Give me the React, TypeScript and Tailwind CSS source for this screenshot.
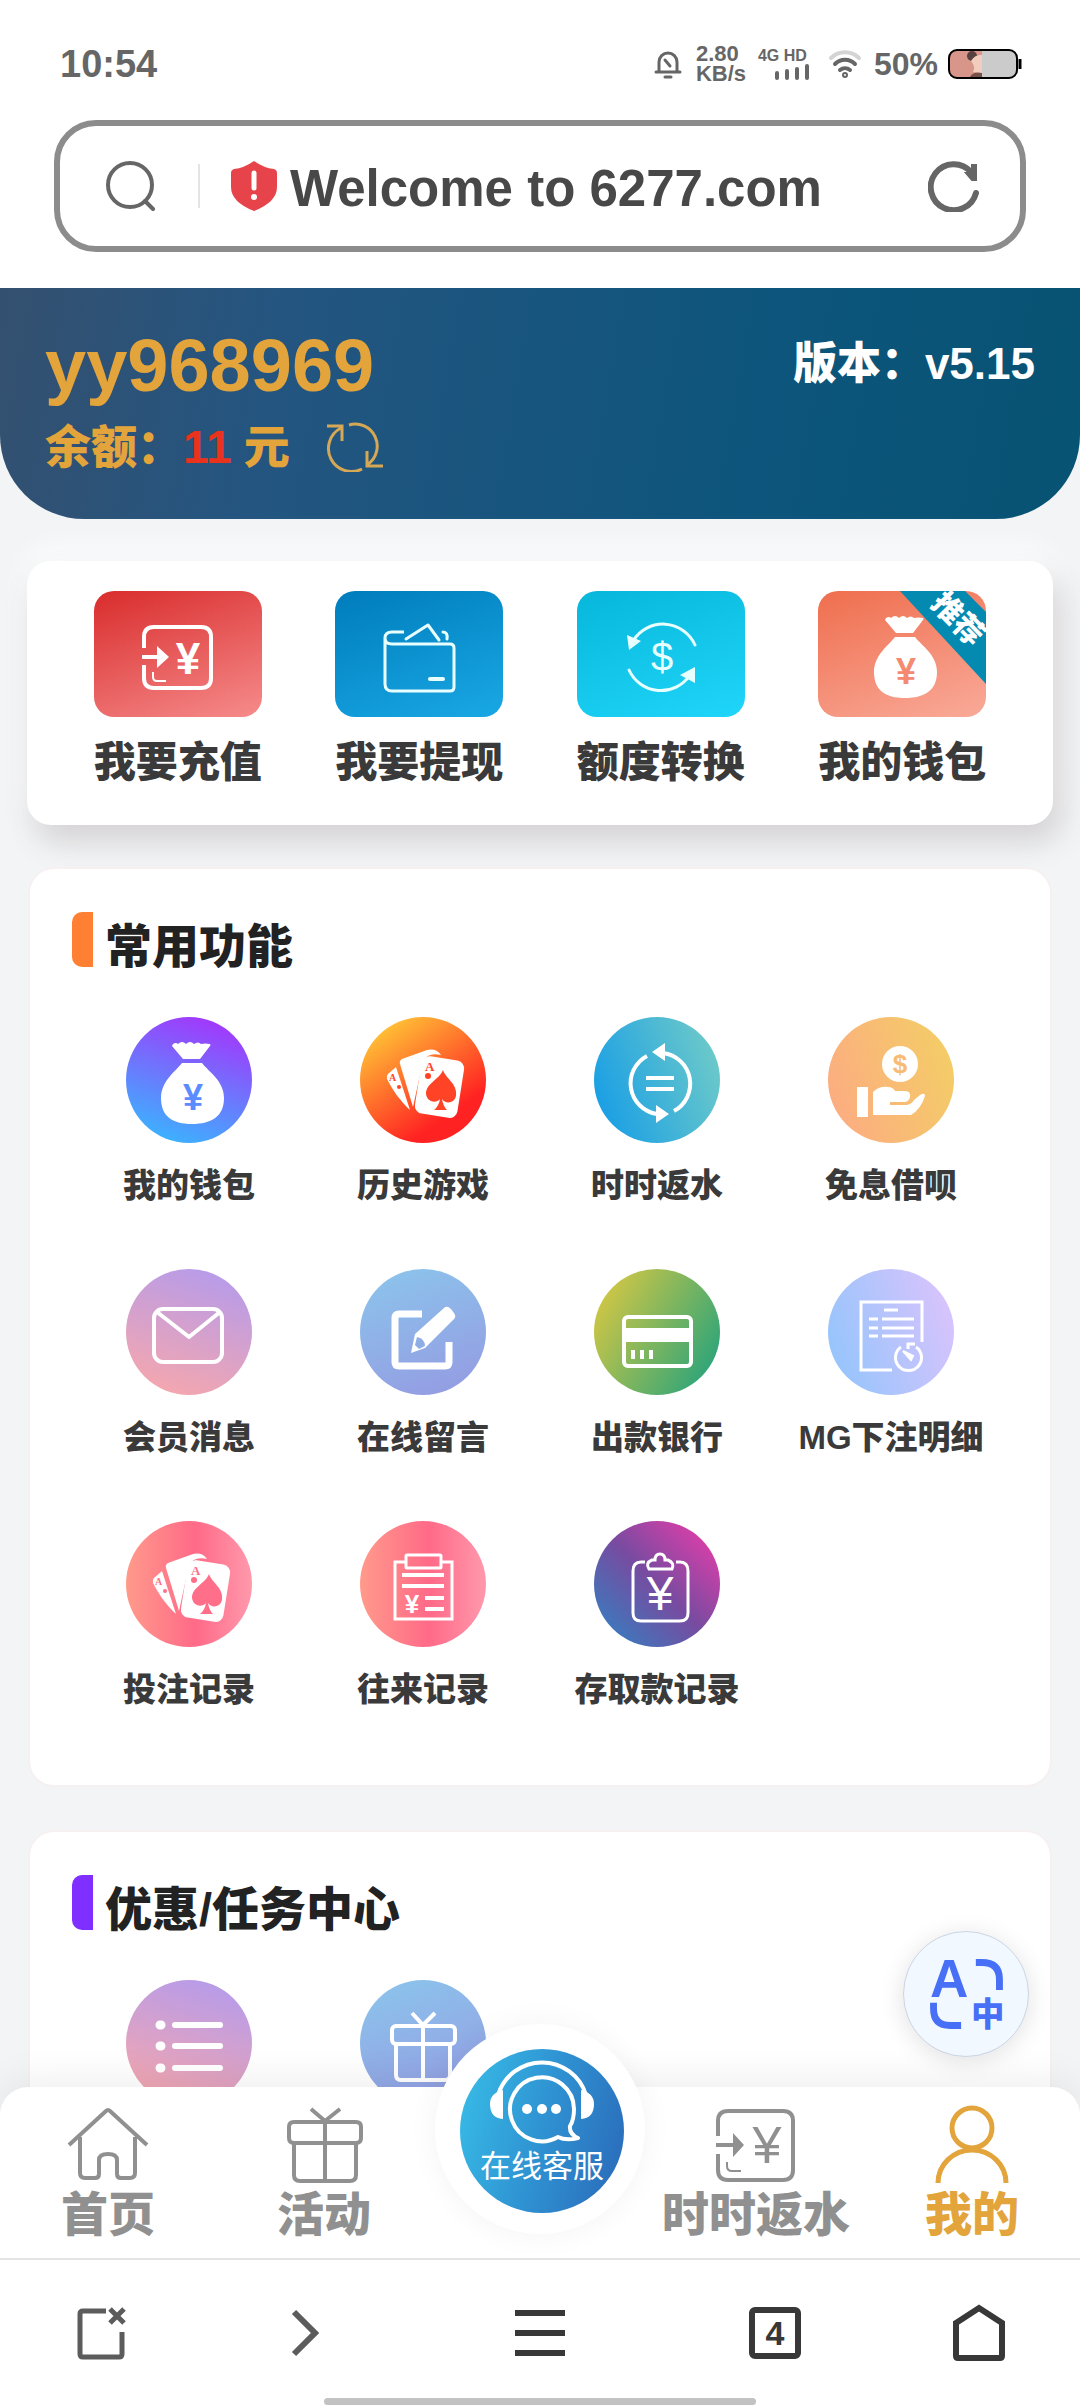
import type { ReactNode } from 'react';
import { clsx } from 'clsx';

const latin = "'Liberation Sans', 'Noto Sans CJK SC', sans-serif";

type IconProps = { tint?: string };

function Yen({ x, y, size, fill = '#fff', weight = 400 }: { x: number; y: number; size: number; fill?: string; weight?: number }) {
  return (
    <text x={x} y={y} textAnchor="middle" fontSize={size} fill={fill} stroke="none" fontWeight={weight} fontFamily={latin}>
      ¥
    </text>
  );
}

function MoneyBag({ tint }: IconProps) {
  return (
    <g>
      <path d="M12 27q3-2 5 0q4-4 8 0q4-4 8 0q4-3 7 0q4-1 9 0q1 1 0 2l-10 13H22L11 29z" fill="#fff" />
      <path d="M21 46h20c7 9 22 18 22 35c0 18-12 26-32 26S0 99 0 81c0-17 15-27 21-35z" fill="#fff" />
      <Yen x={32} y={93} size={36} fill={tint} weight={700} />
    </g>
  );
}

function CardsIcon({ tint }: IconProps) {
  return (
    <g fill="#fff">
      <path d="M36 50l14 43c-10-9-18-21-23-31q-1-3 1-5z" />
      <path d="M53 90L40 47q-1-3 2-5l25-9q9-2 14 5q-13-3-18 6z" />
      <rect x="58" y="41" width="43" height="58" rx="8" transform="rotate(9 79 70)" />
      <path d="M83 53c3 9 15 14 13 26c-2 8-11 8-14 3q1 7 5 11H74q5-4 6-11c-4 5-13 3-14-5c0-11 13-14 17-24z" fill={tint} />
      <text x="65" y="54" fontSize="13" fontWeight="700" fill={tint} fontFamily="'Liberation Serif', serif">A</text>
      <text x="29" y="64" fontSize="10" fontWeight="700" fill={tint} fontFamily="'Liberation Serif', serif">A</text>
      <circle cx="68" cy="59" r="3" fill={tint} />
      <circle cx="39" cy="70" r="2" fill={tint} />
    </g>
  );
}

function RebateIcon() {
  return (
    <g fill="none" stroke="#fff" strokeWidth="4">
      <path d="M69 36a31 31 0 0 1 11 58M53 39a31 31 0 0 0 10 58" />
      <path d="M52 61h28M52 72h28" />
      <path d="M58 35l13-9v18zM75 97l-13-9v18z" fill="#fff" stroke="none" />
    </g>
  );
}

function LoanIcon({ tint }: IconProps) {
  return (
    <g fill="#fff">
      <circle cx="72" cy="47" r="18" />
      <text x="72" y="56" textAnchor="middle" fontSize="26" fontWeight="700" fill={tint} fontFamily={latin}>$</text>
      <rect x="29" y="70" width="11" height="30" />
      <path d="M45 75q6-6 15-5q5 0 7 4h10q6 0 5 6q-1 5-6 5H62v3h17q5-1 7-5l6-5q5-3 5 1q-4 13-14 19H45z" />
    </g>
  );
}

function MailIcon() {
  return (
    <g fill="none" stroke="#fff" strokeWidth="4">
      <rect x="28" y="40" width="68" height="53" rx="9" />
      <path d="M31 43l32 25l31-25" strokeLinejoin="round" />
    </g>
  );
}

function WriteIcon({ tint }: IconProps) {
  return (
    <g fill="none" stroke="#fff" strokeWidth="7">
      <path d="M62 45H39q-4 0-4 4v44q0 4 4 4h46q4 0 4-4V73" />
      <path d="M51 84l4-19l29-26q3-3 7 1l3 4q3 4-1 7L65 79z" fill="#fff" stroke="none" />
      <path d="M57 68q8 2 8 9l-6 3l-4-4z" fill={tint} stroke="none" />
    </g>
  );
}

function BankIcon() {
  return (
    <g fill="none" stroke="#fff" strokeWidth="4">
      <rect x="30" y="48" width="67" height="49" rx="4" />
      <path d="M30 66h67" strokeWidth="14" />
      <path d="M39 81v9M48 81v9M57 81v9" />
    </g>
  );
}

function BetDetailIcon() {
  return (
    <g fill="none" stroke="#fff" strokeWidth="3">
      <path d="M94 73V33H33v68h31" />
      <path d="M56 41h14M41 50h9M54 50h32M41 59h9M54 59h32M41 67h9M54 67h32" />
      <path d="M73 78a13 13 0 1 0 15 0M80 80v-5h7" />
      <path d="M83 91l-8-9l10 5z" fill="#fff" strokeWidth="2" />
    </g>
  );
}

function StatementIcon() {
  return (
    <g fill="none" stroke="#fff" strokeWidth="3">
      <path d="M46 41H35v57h57V41H81" />
      <rect x="46" y="34" width="35" height="13" rx="1" />
      <path d="M42 54h42M42 65h42M65 77h19M65 88h19" strokeWidth="4" />
      <Yen x={52} y={92} size={26} weight={700} />
    </g>
  );
}

function DepositLogIcon() {
  return (
    <g fill="none" stroke="#fff" strokeWidth="3">
      <path d="M51 41h-4q-8 0-8 9v42q0 8 8 8h39q8 0 8-8V50q0-9-8-9h-4" />
      <path d="M55 48q-4-6 3-9h3q0-6 5-6t5 6h3q7 3 4 9z" />
      <Yen x={66} y={89} size={48} />
    </g>
  );
}

function ListIcon() {
  return (
    <g stroke="#fff" strokeWidth="6" strokeLinecap="round">
      <path d="M49 45h45M49 66h45M49 88h45" />
      <path d="M34 45h1M34 66h1M34 88h1" strokeWidth="9" />
    </g>
  );
}

function GiftIcon() {
  return (
    <g fill="none" stroke="#fff" strokeWidth="4">
      <rect x="32" y="46" width="63" height="18" rx="4" />
      <path d="M36 64v31q0 5 5 5h44q5 0 5-5V64M63 46v54M52 33l11 12l12-12" />
    </g>
  );
}

const quickActions = [
  {
    label: '我要充值',
    bg: 'bg-[linear-gradient(160deg,#d92c2c,#f68b8b)]',
    art: (
      <g fill="none" stroke="#fff" strokeWidth="4">
        <path d="M50 57V46q0-10 10-10h47q10 0 10 10v41q0 10-10 10H60q-10 0-10-10V74" />
        <path d="M48 66h16" />
        <path d="M63 55l12 11l-12 11z" fill="#fff" stroke="none" />
        <path d="M59 81v5q0 4 4 4h9" strokeWidth="2" />
        <Yen x={94} y={83} size={44} weight={700} />
      </g>
    ),
  },
  {
    label: '我要提现',
    bg: 'bg-[linear-gradient(160deg,#007cbb,#19a8e5)]',
    art: (
      <g fill="none" stroke="#e8ffff" strokeWidth="3">
        <path d="M69 41H57q-7 0-7 6t7 6h58q4 0 4 4v39q0 4-4 4H57q-7 0-7-7V47" />
        <path d="M71 48l22-14l11 15M108 41q5 0 4 7" strokeLinecap="round" strokeLinejoin="round" />
        <path d="M95 88h13" strokeWidth="4" strokeLinecap="round" />
      </g>
    ),
  },
  {
    label: '额度转换',
    bg: 'bg-[linear-gradient(160deg,#06b7da,#20d5fa)]',
    art: (
      <g fill="none" stroke="#e8ffff" strokeWidth="3">
        <path d="M118 54A35 35 0 0 0 56 50M52 79a35 35 0 0 0 61 5" strokeLinecap="round" />
        <path d="M50 44l14 6l-12 9zM118 76l-15 8l15 8z" fill="#e8ffff" stroke="none" />
        <text x="85" y="80" textAnchor="middle" fontSize="40" fill="#e8ffff" stroke="none" fontFamily={latin}>$</text>
      </g>
    ),
  },
  {
    label: '我的钱包',
    bg: 'bg-[linear-gradient(160deg,#ef6e4e,#f9aa99)]',
    art: (
      <g>
        <g transform="translate(56)"><MoneyBag tint="#f38a71" /></g>
        <path d="M82 0h65l21 21v72z" fill="#0489b1" />
        <text x="139" y="38" transform="rotate(46 139 29)" textAnchor="middle" fontSize="30" fontWeight="900" fill="#fff" fontFamily={latin}>
          推荐
        </text>
      </g>
    ),
  },
];

type Item = { label: string; bg: string; art: ReactNode };

const commonItems: Item[] = [
  { label: '我的钱包', bg: 'bg-[linear-gradient(20deg,#30c0ff,#ae29fb)]', art: <g transform="translate(35)"><MoneyBag tint="#5a8bff" /></g> },
  { label: '历史游戏', bg: 'bg-[linear-gradient(145deg,#ffd338_5%,#ff2222_75%)]', art: <CardsIcon tint="#ff4327" /> },
  { label: '时时返水', bg: 'bg-[linear-gradient(70deg,#109ae8,#76cec6)]', art: <RebateIcon /> },
  { label: '免息借呗', bg: 'bg-[linear-gradient(70deg,#fda984,#f3d064)]', art: <LoanIcon tint="#f7bb72" /> },
  { label: '会员消息', bg: 'bg-[linear-gradient(20deg,#fba8a8,#b09af0)]', art: <MailIcon /> },
  { label: '在线留言', bg: 'bg-[linear-gradient(160deg,#8bc6ec,#9599e2)]', art: <WriteIcon tint="#90aee6" /> },
  { label: '出款银行', bg: 'bg-[linear-gradient(120deg,#e6cb3e,#17a080)]', art: <BankIcon /> },
  { label: 'MG下注明细', bg: 'bg-[linear-gradient(70deg,#8ec5fc,#e0c3fc)]', art: <BetDetailIcon /> },
  { label: '投注记录', bg: 'bg-[linear-gradient(90deg,#ff9a8b,#ff6a88_55%,#ff99ac)]', art: <CardsIcon tint="#ff6f89" /> },
  { label: '往来记录', bg: 'bg-[linear-gradient(90deg,#ff9a8b,#ff6a88_55%,#ff99ac)]', art: <StatementIcon /> },
  { label: '存取款记录', bg: 'bg-[linear-gradient(225deg,#f53bac,#784ba0_50%,#2b86c5)]', art: <DepositLogIcon /> },
];

const promoItems: Item[] = [
  { label: '任务中心', bg: 'bg-[linear-gradient(20deg,#fba8a8,#b09af0)]', art: <ListIcon /> },
  { label: '优惠活动', bg: 'bg-[linear-gradient(160deg,#8bc6ec,#9599e2)]', art: <GiftIcon /> },
];

function StatusBar() {
  return (
    <div className="flex h-[120px] shrink-0 items-center justify-between pt-2 pr-[58px] pl-[60px] font-bold text-[#666]">
      <span className="text-[38px] leading-none">10:54</span>
      <div className="flex items-center">
        <svg width="28" height="30" viewBox="0 0 28 30" fill="none" stroke="#666" strokeWidth="3" strokeLinecap="round">
          <path d="M2 23h24M5 22v-9a9 9 0 0 1 18 0v9M11 11l5 6M11 28h6" />
        </svg>
        <div className="ml-3.5 flex w-[52px] flex-col text-[22px] leading-5">
          <span>2.80</span>
          <span>KB/s</span>
        </div>
        <div className="ml-2.5 flex w-[52px] flex-col">
          <span className="text-base leading-4">4G HD</span>
          <svg className="self-end" width="36" height="16" viewBox="0 0 36 16" stroke="#666" strokeWidth="4" strokeLinecap="round">
            <path d="M3 9v5M13 7v7M23 5v9M33 2v12" />
          </svg>
        </div>
        <svg className="ml-[18px]" width="34" height="30" viewBox="0 0 34 30" fill="none" stroke="#666" strokeWidth="4" strokeLinecap="round">
          <path d="M3 9a20 20 0 0 1 28 0" stroke="#d4d4d4" />
          <path d="M7 15a14 14 0 0 1 20 0M12 21a8 8 0 0 1 10 0" />
          <circle cx="17" cy="26" r="1" />
        </svg>
        <span className="ml-3 text-[32px] leading-none">50%</span>
        <svg className="ml-2.5" width="74" height="30" viewBox="0 0 74 30">
          <rect x="1" y="1" width="68" height="28" rx="8" fill="#cbcbcb" />
          <path d="M9 1h25v28H9q-8 0-8-8V9q0-8 8-8z" fill="#d8968a" />
          <circle cx="24" cy="7" r="5" fill="#57403f" />
          <path d="M23 12q4-7 11-6v19l-9-2q3-5-2-11z" fill="#f0cdbd" />
          <path d="M22 28q3-6 12-4v4z" fill="#775049" />
          <rect x="1" y="1" width="68" height="28" rx="8" fill="none" stroke="#000" strokeWidth="2" />
          <path d="M72 10v10" stroke="#000" strokeWidth="3" />
        </svg>
      </div>
    </div>
  );
}

function AddressBar() {
  return (
    <div className="mx-[54px] mb-9 flex h-[132px] shrink-0 items-center rounded-[42px] border-[6px] border-[#8c8c8c] pr-10 pl-[46px]">
      <svg width="50" height="50" viewBox="0 0 50 50" fill="none" stroke="#666" strokeWidth="4" className="shrink-0">
        <circle cx="24" cy="24" r="22" />
        <path d="M39 40l8 8" strokeLinecap="round" />
      </svg>
      <span className="ml-[42px] h-11 w-0.5 shrink-0 bg-[#e4e4e4]" />
      <svg className="ml-[30px] shrink-0" width="48" height="52" viewBox="0 0 48 52">
        <path d="M24 1q10 7 20 8q3 1 3 4v14q0 15-23 24Q1 42 1 27V13q0-3 3-4q10-1 20-8z" fill="#e6434b" />
        <path d="M24 13v15" stroke="#fff" strokeWidth="5" strokeLinecap="round" />
        <circle cx="24" cy="37" r="3" fill="#fff" />
      </svg>
      <input
        type="text"
        readOnly
        aria-label="地址栏"
        value="Welcome to 6277.com"
        className="ml-3 min-w-0 flex-1 bg-transparent pt-1.5 text-[51px] font-bold text-[#484848] outline-none"
      />
      <button type="button" aria-label="刷新" className="shrink-0">
        <svg width="52" height="52" viewBox="0 0 52 52" fill="none" stroke="#666" strokeWidth="6" strokeLinecap="round">
          <path d="M48 33A23 23 0 1 1 43 12" />
          <path d="M48 5v15h-4l-6-7h6V5z" fill="#666" strokeWidth="2" />
        </svg>
      </button>
    </div>
  );
}

function AccountHeader() {
  return (
    <header className="flex items-start justify-between rounded-b-[84px] bg-[linear-gradient(100deg,#34506f,#245580_25%,#0d557c_70%,#075373)] px-[45px] pt-[42px] pb-[42px] text-[#e2a43b]">
      <div>
        <p className="text-[74px] leading-[72px] font-bold">yy968969</p>
        <div className="mt-[15px] flex items-center text-[46px] leading-[60px] font-black">
          <span>余额：</span>
          <span className="text-[#e9331c]">11</span>
          <span className="ml-3">元</span>
          <button type="button" aria-label="刷新余额" className="ml-9">
            <svg width="58" height="50" viewBox="0 0 58 50" fill="none" stroke="#d6a754" strokeWidth="3">
              <path d="M23 3a22 22 0 0 1 19 39M36 47A23 23 0 0 1 15 6M1 4h15v15M57 44H41V29" />
            </svg>
          </button>
        </div>
      </div>
      <p className="text-[44px] leading-[68px] font-black text-white">版本：v5.15</p>
    </header>
  );
}

function QuickActions() {
  return (
    <div className="mx-[27px] mt-[42px] grid grid-cols-4 rounded-3xl bg-white px-[30px] pt-[30px] pb-8 shadow-[8px_16px_30px_rgba(90,70,70,0.2),0_-12px_30px_rgba(255,255,255,0.9)]">
      {quickActions.map((item) => (
        <a key={item.label} href="#" className="flex flex-col items-center text-[#3a3a3a]">
          <span className={clsx('overflow-hidden rounded-[20px]', item.bg)}>
            <svg width="168" height="126" viewBox="0 0 168 126">{item.art}</svg>
          </span>
          <span className="mt-4 text-[42px] leading-[60px] font-black">{item.label}</span>
        </a>
      ))}
    </div>
  );
}

function Section({ title, accent, items, className }: { title: string; accent: string; items: Item[]; className?: string }) {
  return (
    <section className={clsx('mx-[30px] rounded-3xl bg-white px-[42px] pt-[43px] pb-3 ring-2 ring-[#f6f0f1]', className)}>
      <div className="flex items-start">
        <span className={clsx('h-[55px] w-[21px] rounded-l-[10px]', accent)} />
        <h2 className="ml-3 pt-1 text-[47px] leading-[62px] font-black text-[#222]">{title}</h2>
      </div>
      <div className="mt-[39px] grid grid-cols-4">
        {items.map((item) => (
          <a key={item.label} href="#" className="flex h-[252px] flex-col items-center text-[#3a3a3a]">
            <span className={clsx('size-[126px] rounded-full', item.bg)}>
              <svg viewBox="0 0 126 126">{item.art}</svg>
            </span>
            <span className="mt-[18px] text-[33px] leading-[50px] font-black whitespace-nowrap">{item.label}</span>
          </a>
        ))}
      </div>
    </section>
  );
}

function TranslateButton() {
  return (
    <button type="button" aria-label="翻译" className="absolute right-[51px] bottom-[30px] size-[126px] rounded-full border border-[#cbd5e4] bg-[#f2f8ff] shadow-[0_4px_24px_rgba(0,0,0,0.12)]">
      <svg viewBox="0 0 126 126" fill="none" stroke="#4870f6" strokeWidth="7">
        <path d="M73 31h6q18 0 18 17v11M30 72v6q0 17 17 17h11" />
        <g stroke="none" fill="#4870f6">
          <text x="46" y="66" textAnchor="middle" fontSize="54" fontWeight="700" fontFamily={latin}>A</text>
          <text x="85" y="96" textAnchor="middle" fontSize="34" fontWeight="900" fontFamily={latin}>中</text>
        </g>
      </svg>
    </button>
  );
}

function ServiceButton() {
  return (
    <button type="button" className="absolute -top-[63px] left-1/2 flex size-[210px] -translate-x-1/2 items-center justify-center rounded-full bg-white pt-1 pl-1 shadow-[0_0_30px_rgba(0,0,0,0.05)]">
      <span className="flex size-[164px] flex-col items-center rounded-full bg-[linear-gradient(105deg,#38bfe8,#2f92d2_50%,#2a68b8)]">
        <svg width="164" height="98" viewBox="0 0 164 98" fill="none" stroke="#fff" strokeWidth="4">
          <path d="M38 46a46 46 0 0 1 88 0" />
          <path d="M43 41v29q-13-1-13-15q0-11 13-14zM121 41v29q13-1 13-15q0-11-13-14z" fill="#fff" stroke="none" />
          <path d="M110 77q4-6 4-17a32 32 0 1 0-16 28q8 4 20 1q-9-4-8-12z" strokeLinejoin="round" />
          <g fill="#fff" stroke="none">
            <circle cx="67" cy="60" r="5" />
            <circle cx="82" cy="60" r="5" />
            <circle cx="96" cy="60" r="5" />
          </g>
        </svg>
        <span className="text-[31px] leading-10 font-normal text-white">在线客服</span>
      </span>
    </button>
  );
}

const tabs = [
  {
    label: '首页',
    art: <path d="M3 40L40 6q2-2 4 0l37 34M14 32v36q0 5 5 5h10q4 0 4-4V55q0-6 9-6t9 6v14q0 4 4 4h9q5 0 5-5V32" />,
  },
  {
    label: '活动',
    art: <path d="M12 17h62q5 0 5 5v11q0 5-5 5H12q-5 0-5-5V22q0-5 5-5zM12 38v32q0 6 6 6h50q6 0 6-6V38M43 17v59M29 4l14 12L58 4" />,
  },
  null,
  {
    label: '时时返水',
    art: (
      <>
        <path d="M4 31V16Q4 6 14 6h55q10 0 10 10v49q0 10-10 10H14Q4 75 4 65V49M2 40h18" />
        <path d="M19 28l11 12l-11 12z" fill="#909090" stroke="none" />
        <path d="M13 57v4q0 5 5 5h9" strokeWidth="2" />
        <Yen x={53} y={58} size={52} fill="#909090" />
      </>
    ),
  },
  {
    label: '我的',
    active: true,
    art: (
      <g strokeWidth="5">
        <circle cx="42" cy="23" r="20" />
        <path d="M8 78a34 33 0 0 1 68 0" />
      </g>
    ),
  },
];

function TabBar() {
  return (
    <nav className="relative z-10 grid h-[171px] shrink-0 grid-cols-5 rounded-t-[28px] bg-white shadow-[0_-6px_40px_rgba(0,0,0,0.07)]">
      {tabs.map((tab) =>
        tab ? (
          <a
            key={tab.label}
            href="#"
            className={clsx('flex flex-col items-center pt-[18px]', tab.active ? 'text-[#e2a43b]' : 'text-[#909090]')}
          >
            <svg width="84" height="84" viewBox="0 0 84 84" fill="none" stroke="currentColor" strokeWidth="4">
              {tab.art}
            </svg>
            <span className="text-[47px] leading-[52px] font-black whitespace-nowrap">{tab.label}</span>
          </a>
        ) : (
          <div key="service" className="relative">
            <ServiceButton />
          </div>
        ),
      )}
    </nav>
  );
}

function BrowserBar() {
  return (
    <footer className="relative z-20 flex h-[150px] shrink-0 flex-col items-center border-t-2 border-[#e4e4e4] bg-white">
      <div className="grid w-full flex-1 grid-cols-[202fr_206fr_264fr_206fr_202fr] place-items-center pt-2">
        <button type="button" aria-label="关闭标签页">
          <svg width="52" height="56" viewBox="0 0 52 56" fill="none" stroke="#5c5c5c" strokeWidth="5">
            <path d="M31 6H8q-3 0-3 3v40q0 3 3 3h36q3 0 3-3V27" />
            <path d="M35 4l14 14M49 4L35 18" />
          </svg>
        </button>
        <button type="button" aria-label="前进">
          <svg width="28" height="48" viewBox="0 0 28 48" fill="none" stroke="#5c5c5c" strokeWidth="6">
            <path d="M3 3l21 21L3 45" />
          </svg>
        </button>
        <button type="button" aria-label="菜单" className="flex flex-col gap-3.5">
          <span className="h-1.5 w-[50px] bg-[#383838]" />
          <span className="h-1.5 w-[50px] bg-[#383838]" />
          <span className="h-1.5 w-[50px] bg-[#383838]" />
        </button>
        <button type="button" aria-label="标签页" className="flex size-[52px] items-center justify-center rounded-md border-[6px] border-[#383838] text-[34px] leading-none font-bold text-[#383838]">
          4
        </button>
        <button type="button" aria-label="主页">
          <svg width="52" height="58" viewBox="0 0 52 58" fill="none" stroke="#383838" strokeWidth="6">
            <path d="M3 19L26 4l23 15v33q0 2-2 2H5q-2 0-2-2z" />
          </svg>
        </button>
      </div>
      <span className="mb-[3px] h-[7px] w-2/5 rounded-full bg-[#c2c2c2]" />
    </footer>
  );
}

export default function App() {
  return (
    <div className="flex h-screen flex-col overflow-hidden bg-[#f2f4f6] font-['Liberation_Sans','Noto_Sans_CJK_SC',sans-serif]">
      <div className="flex flex-col bg-white">
        <StatusBar />
        <AddressBar />
      </div>
      <div className="relative min-h-0 flex-1">
        <main className="h-full overflow-hidden">
          <AccountHeader />
          <QuickActions />
          <Section title="常用功能" accent="bg-[#ff8033]" items={commonItems} className="mt-11" />
          <Section title="优惠/任务中心" accent="bg-[#7f2fff]" items={promoItems} className="mt-[47px]" />
        </main>
        <TranslateButton />
      </div>
      <TabBar />
      <BrowserBar />
    </div>
  );
}
